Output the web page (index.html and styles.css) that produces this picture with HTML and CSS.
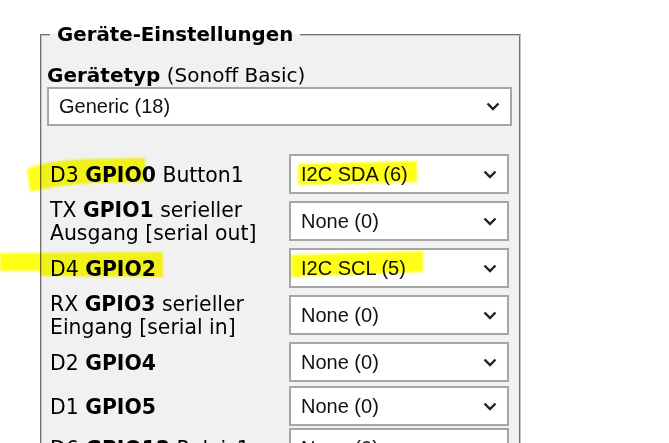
FILE: index.html
```html
<!DOCTYPE html>
<html lang="de">
<head>
<meta charset="utf-8">
<title>Geräte-Einstellungen</title>
<link rel="stylesheet" href="styles.css">
</head>
<body>
<div class="page">
  <fieldset class="box">
    <legend class="box-title">Geräte-Einstellungen</legend>
    <div class="type-label"><b>Gerätetyp</b> (Sonoff Basic)</div>
    <div class="select wide"><span>Generic (18)</span><svg class="chev" width="14" height="9" viewBox="0 0 14 9"><path d="M1.5 1.5 L7 7 L12.5 1.5" fill="none" stroke="#222" stroke-width="2.4"/></svg></div>
    <div class="rows">
      <div class="row g7"><div class="lbl">D3 <b>GPIO0</b> Button1</div><div class="select"><span>I2C SDA (6)</span><svg class="chev" width="14" height="9" viewBox="0 0 14 9"><path d="M1.5 1.5 L7 7 L12.5 1.5" fill="none" stroke="#222" stroke-width="2.4"/></svg></div></div>
      <div class="row g7"><div class="lbl">TX <b>GPIO1</b> serieller Ausgang [serial out]</div><div class="select"><span>None (0)</span><svg class="chev" width="14" height="9" viewBox="0 0 14 9"><path d="M1.5 1.5 L7 7 L12.5 1.5" fill="none" stroke="#222" stroke-width="2.4"/></svg></div></div>
      <div class="row g7"><div class="lbl">D4 <b>GPIO2</b></div><div class="select"><span>I2C SCL (5)</span><svg class="chev" width="14" height="9" viewBox="0 0 14 9"><path d="M1.5 1.5 L7 7 L12.5 1.5" fill="none" stroke="#222" stroke-width="2.4"/></svg></div></div>
      <div class="row g7"><div class="lbl">RX <b>GPIO3</b> serieller Eingang [serial in]</div><div class="select"><span>None (0)</span><svg class="chev" width="14" height="9" viewBox="0 0 14 9"><path d="M1.5 1.5 L7 7 L12.5 1.5" fill="none" stroke="#222" stroke-width="2.4"/></svg></div></div>
      <div class="row g4"><div class="lbl">D2 <b>GPIO4</b></div><div class="select"><span>None (0)</span><svg class="chev" width="14" height="9" viewBox="0 0 14 9"><path d="M1.5 1.5 L7 7 L12.5 1.5" fill="none" stroke="#222" stroke-width="2.4"/></svg></div></div>
      <div class="row g2"><div class="lbl">D1 <b>GPIO5</b></div><div class="select"><span>None (0)</span><svg class="chev" width="14" height="9" viewBox="0 0 14 9"><path d="M1.5 1.5 L7 7 L12.5 1.5" fill="none" stroke="#222" stroke-width="2.4"/></svg></div></div>
      <div class="row g2"><div class="lbl">D6 <b>GPIO12</b> Relais1</div><div class="select"><span>None (0)</span><svg class="chev" width="14" height="9" viewBox="0 0 14 9"><path d="M1.5 1.5 L7 7 L12.5 1.5" fill="none" stroke="#222" stroke-width="2.4"/></svg></div></div>
    </div>
  </fieldset>
</div>
<svg class="marker" width="669" height="443" viewBox="0 0 669 443">
  <defs><filter id="soft" x="-5%" y="-20%" width="110%" height="140%"><feGaussianBlur stdDeviation="0.9"/></filter></defs>
  <g fill="#ffff14" filter="url(#soft)">
    <path d="M27 169 C40 163 60 160 90 159 L145 158 L145 182 L95 183 C70 184 50 187 30 192 Z"/>
    <path d="M0 253 L163 252 L163 277 L41 276 L41 271 L0 271 Z"/>
    <path d="M298 164 L417 161 L417 182 L298 185 Z"/>
    <path d="M291 255 L423 251 L423 272 L291 277 Z"/>
  </g>
</svg>
</body>
</html>
```

FILE: styles.css
```css
html, body {
  margin: 0;
  padding: 0;
  background: #ffffff;
  width: 669px;
  height: 443px;
  overflow: hidden;
}

.page {
  padding: 24px 0 0 40px;
  font-family: "DejaVu Sans", Verdana, sans-serif;
  font-size: 20.4px;
  color: #000;
}

.box {
  box-sizing: border-box;
  width: 481px;
  margin: 0;
  padding: 0 7px 0 5px;
  border: 2px groove #c4c4c4;
  background: #f1f1f1;
}

.box-title {
  margin-left: 3px;
  padding: 0 7px;
  font-weight: bold;
  font-size: 19.8px;
  line-height: 21px;
}

.type-label {
  margin-top: 19px;
  font-size: 20px;
  line-height: 22px;
}

.select {
  display: flex;
  align-items: center;
  justify-content: space-between;
  box-sizing: border-box;
  height: 40px;
  padding: 0 10px;
  border: 2px solid #a6a6a6;
  background: #fff;
  font-family: "Liberation Sans", Arial, sans-serif;
  font-size: 20px;
  color: #111;
}

.select.wide {
  height: 39px;
  margin-top: 1px;
  width: 465px;
}

.rows {
  margin-top: 28px;
}

.row {
  display: flex;
  align-items: center;
  height: 40px;
}

.row.g7 { margin-bottom: 7px; }
.row.g4 { margin-bottom: 4px; }
.row.g2 { margin-bottom: 2px; }

.lbl {
  box-sizing: border-box;
  width: 242px;
  padding: 2px 0 0 3px;
  line-height: 23px;
}

.row .select {
  width: 220px;
}

.marker {
  position: absolute;
  left: 0;
  top: 0;
  mix-blend-mode: multiply;
  pointer-events: none;
}
```
